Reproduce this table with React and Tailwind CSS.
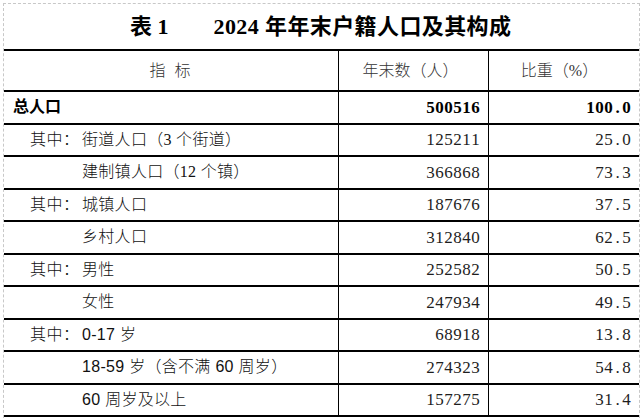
import React from "react";

const CJK = "font-['Liberation_Serif','Noto_Sans_CJK_SC',serif]";
const CJK_SANS = "font-['Liberation_Sans','Noto_Sans_CJK_SC',sans-serif]";

const rows = [
  { label: "总人口", bold: true, n: "500516", p: "100.0" },
  { prefix: "其中：", label: "街道人口（3 个街道）", n: "125211", p: "25.0" },
  { label: "建制镇人口（12 个镇）", n: "366868", p: "73.3" },
  { prefix: "其中：", label: "城镇人口", n: "187676", p: "37.5" },
  { label: "乡村人口", n: "312840", p: "62.5" },
  { prefix: "其中：", label: "男性", n: "252582", p: "50.5" },
  { label: "女性", n: "247934", p: "49.5" },
  { prefix: "其中：", label: "0-17 岁", n: "68918", p: "13.8", sans: true },
  { label: "18-59 岁（含不满 60 周岁）", n: "274323", p: "54.8", sans: true },
  { label: "60 周岁及以上", n: "157275", p: "31.4", sans: true },
];

function Mono({ text, bold }) {
  return (
    <span className={`flex font-['Liberation_Serif',serif] text-[17px] ${bold ? "font-bold" : ""}`}>
      {text.split("").map((c, i) => (
        <span key={i} className="inline-block w-[9px] text-center">
          {c}
        </span>
      ))}
    </span>
  );
}

export default function App() {
  return (
    <div className="w-[642px] h-[419px] bg-white overflow-hidden">
      <div className="ml-[3px] mt-[3px] w-[637px] h-[420px] border-l border-t border-r border-dashed border-[#c8c8c8]">
        <div className={`h-[45px] flex items-center pl-[126px] text-[22px] font-bold text-black ${CJK}`}>
          <span>表 1</span>
          <span className="ml-[45px] tracking-[0.4px]">2024 年年末户籍人口及其构成</span>
        </div>
        <div className="border-t-2 border-black text-[#1e1e1e]">
          <div className={`grid grid-cols-[335px_150px_149px] h-[41px] border-b-2 border-black text-[16px] font-light text-[#333] ${CJK}`}>
            <div className="border-r border-black flex items-center justify-center pr-[2px]">
              <span>指</span>
              <span className="ml-[9px]">标</span>
            </div>
            <div className="border-r border-black flex items-center justify-center pr-[6px]">年末数（人）</div>
            <div className="flex items-center justify-center pr-[8px]">比重（%）</div>
          </div>
          {rows.map((r, i) => (
            <div key={i} className="grid grid-cols-[335px_150px_149px] h-[32.5px] border-b-2 border-black">
              <div className={`border-r border-black flex items-center text-[16px] ${r.sans ? CJK_SANS : CJK} ${r.bold ? "font-bold pl-[9px] text-black" : "font-light text-[#111] pl-[26px]"}`}>
                {r.bold ? (
                  r.label
                ) : (
                  <>
                    <span className="w-[52px] shrink-0 tracking-[0.5px]">{r.prefix || ""}</span>
                    <span className="tracking-[0.3px]">{r.label}</span>
                  </>
                )}
              </div>
              <div className={`border-r border-black flex items-center justify-end pr-[8px] ${r.bold ? "text-black" : ""}`}>
                <Mono text={r.n} bold={r.bold} />
              </div>
              <div className={`flex items-center justify-end pr-[7px] ${r.bold ? "text-black" : ""}`}>
                <Mono text={r.p} bold={r.bold} />
              </div>
            </div>
          ))}
        </div>
      </div>
    </div>
  );
}
